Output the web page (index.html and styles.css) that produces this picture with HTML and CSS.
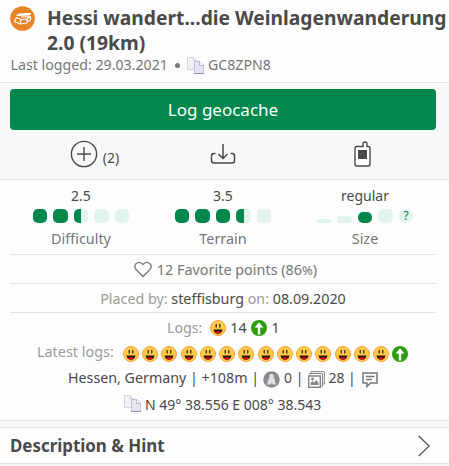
FILE: index.html
```
<!DOCTYPE html>
<html lang="en">
<head>
<meta charset="utf-8">
<title>Geocache</title>
<link rel="stylesheet" href="styles.css">
</head>
<body>
<svg class="defs" width="0" height="0">
  <symbol id="face" viewBox="0 0 16 16">
    <circle cx="8" cy="8" r="7.500" fill="#ffcb48" stroke="#f5a035"/>
    <path d="M6.200 4v3.500M9.800 4v3.500" stroke="#2b1c0c" stroke-width="1.200"/>
    <path d="M3.500 9.500h9q-.7 4.200-4.500 4.200T3.500 9.500z" fill="#321008"/>
    <path d="M5.200 12.300q2.800-2 5.600 0-2.800 2.400-5.600 0z" fill="#f20d16"/>
  </symbol>
  <symbol id="up" viewBox="0 0 16 16">
    <circle cx="8" cy="8" r="8" fill="#2a9d08"/>
    <path d="M8 2.200L12.500 7.500H9.200V14.500H6.800V7.500H3.500z" fill="#fff"/>
  </symbol>
  <symbol id="copy" viewBox="0 0 17 17">
    <path d="M.5 .5h6l3 3v9h-9z" fill="#f1f1f8" stroke="#d3d3e2"/>
    <path d="M6.500 .5v3h3" fill="#fff" stroke="#c9c9dc"/>
    <path d="M7.500 4.500h5.500l3.500 3.500v8.500h-9z" fill="#e6e6f3" stroke="#c0c0d8"/>
    <path d="M12.500 4.500v4h4" fill="#fff" stroke="#b5b5d0"/>
    <path d="M7 16.500h10" stroke="#8c8cb6"/>
  </symbol>
</svg>
<header class="header">
  <div class="title-row">
    <svg class="badge" width="25" height="25" viewBox="0 0 25 25">
      <circle cx="12.500" cy="12.500" r="12.300" fill="#e98424"/>
      <g fill="none" stroke="#fff" stroke-width="1.200" stroke-linejoin="round">
        <path d="M9.500 8L20.500 7.500 19 8.800 7 9.500z" fill="#fff"/>
        <path d="M6.500 11.500L4.500 15.500 10 18 11 13.500zM11 13.500l6-.5v4l-7 1M17 12.500l3.500-2v3.500L17 16M11 11l9.500-.5"/>
      </g>
    </svg>
    <h1 class="title">Hessi wandert...die Weinlagenwanderung<br>2.0 (19km)</h1>
  </div>
  <div class="meta"><span class="last">Last logged: 29.03.2021</span><i class="bullet"></i><svg width="17" height="17"><use href="#copy"/></svg><span class="code">GC8ZPN8</span></div>
</header>
<section class="actions">
  <button class="log">Log geocache</button>
  <div class="tools">
    <div class="tool add">
      <svg width="28" height="28" viewBox="0 0 28 28" fill="none" stroke="#4a4a4a" stroke-width="1.400"><circle cx="14" cy="14" r="12.600"/><path d="M14 7v14M7 14h14"/></svg>
      <span>(2)</span>
    </div>
    <div class="tool"><svg width="26" height="24" viewBox="0 0 26 24" fill="none" stroke="#4a4a4a" stroke-width="1.500"><path d="M13 1v14.500M8.500 11l4.500 4.500 4.500-4.500M5.500 10.500H4Q1.500 10.500 1.500 13v4.500Q1.500 20 4 20h18q2.500 0 2.500-2.500V13q0-2.500-2.500-2.500h-1.500"/></svg></div>
    <div class="tool gps"><svg width="17" height="26" viewBox="0 0 17 26"><path d="M3 5.500h6V3Q9 1 11 1t2 2v2.500h1.200q1.800 0 1.800 1.800v15.900q0 1.800-1.800 1.800H2.800Q1 25 1 23.200V7.300q0-1.800 2-1.800z" fill="#fff" stroke="#4a4a4a" stroke-width="1.400"/><path d="M4 9h9v9H4z" fill="#4a4a4a"/></svg></div>
  </div>
</section>
<main class="info">
  <div class="ratings">
    <div class="rating"><span class="value">2.5</span><div class="dots"><i class="on"></i><i class="on"></i><i class="half"></i><i></i><i></i></div><span class="label">Difficulty</span></div>
    <div class="rating"><span class="value">3.5</span><div class="dots"><i class="on"></i><i class="on"></i><i class="on"></i><i class="half"></i><i></i></div><span class="label">Terrain</span></div>
    <div class="rating"><span class="value">regular</span><div class="dots"><i class="s1"></i><i class="s2"></i><i class="on s3"></i><i></i><i class="q">?</i></div><span class="label">Size</span></div>
  </div>
  <div class="row fav"><svg width="18" height="17" viewBox="0 0 18 17"><path d="M9 15.500L2.500 9Q-.5 5.500 2 2.700 5.500-.5 9 3.500 12.500-.5 16 2.700 18.500 5.500 15.500 9z" fill="none" stroke="#777" stroke-width="1.300"/></svg><span>12 Favorite points (86<small>%</small>)</span></div>
  <div class="row placed"><span><em>Placed by:</em> steffisburg <em>on:</em> 08.09.2020</span></div>
  <div class="line logs"><em>Logs:</em><svg class="f" width="16" height="16"><use href="#face"/></svg><span>14</span><svg class="u" width="16" height="16"><use href="#up"/></svg><span>1</span></div>
  <div class="line latest"><em>Latest logs:</em><div class="faces">
    <svg><use href="#face"/></svg><svg><use href="#face"/></svg><svg><use href="#face"/></svg><svg><use href="#face"/></svg><svg><use href="#face"/></svg><svg><use href="#face"/></svg><svg><use href="#face"/></svg><svg><use href="#face"/></svg><svg><use href="#face"/></svg><svg><use href="#face"/></svg><svg><use href="#face"/></svg><svg><use href="#face"/></svg><svg><use href="#face"/></svg><svg><use href="#face"/></svg><svg><use href="#up"/></svg>
  </div></div>
  <div class="line place"><span class="region">Hessen, Germany | +108m |</span>
    <svg class="bug" width="17" height="17" viewBox="0 0 17 17"><circle cx="8.500" cy="8.500" r="8.300" fill="#8b8b8f"/><path d="M8.500 2.800q2.200 0 2.200 2.200v2q1.800 1.500 1.300 4.500l1.500 2H9.500v-1h-2v1h-4l1.500-2Q4.500 8.500 6.300 7V5q0-2.200 2.200-2.200z" fill="#e2e2e6"/></svg><span class="zero">0 |</span>
    <svg class="pics" width="17" height="17" viewBox="0 0 17 17" fill="none" stroke="#858588"><path d="M3 3V.6h13.400V13H15M1.800 4.500V2.500h12.700V15H13"/><path d="M.7 5h11.600v11.300H.7z" fill="#fff" stroke-width="1.400"/><path d="M2.500 14v-2l2-2 1.500 1.500L8.500 9l2 3v2z" fill="#858588" stroke="none"/><circle cx="4.500" cy="8" r="1" fill="#858588"/></svg><span class="count">28 |</span>
    <svg class="note" width="16" height="16" viewBox="0 0 16 16" fill="none" stroke="#77777a" stroke-width="1.500"><path d="M1 1h14v10H8.500L5 14.500V11H1zM4 4.500h8.500M4 7.500h6"/></svg>
  </div>
  <div class="line coords"><svg width="17" height="17"><use href="#copy"/></svg><span>N 49° 38.556 E 008° 38.543</span></div>
</main>
<section class="desc"><h2>Description &amp; Hint</h2><svg width="12" height="22" viewBox="0 0 12 22" fill="none" stroke="#4a4a4a" stroke-width="1.200"><path d="M.7 1L11.200 11 .7 21"/></svg></section>
</body>
</html>
```
FILE: styles.css
```
* { box-sizing: border-box; }
body {
  margin: 0; height: 466px; overflow: hidden;
  background: #f7f8f8;
  font: 14px/20px "Noto Sans", sans-serif; color: #4a4a4a;
}
svg { display: block; flex: none; }
.defs { position: absolute; }
h1, h2 { margin: 0; }
em { font-style: normal; color: #9b9b9b; }
span, em { white-space: nowrap; }
.header { height: 83px; padding: 5px 0 0 10px; background: #fdfdfd; border-bottom: 1px solid #dfe3e1; }
.title-row { display: flex; height: 50px; }
.badge { margin-top: 1px; }
.title { margin-left: 12px; font-size: 19.250px; line-height: 25px; white-space: nowrap; }
.meta { display: flex; align-items: center; height: 20px; color: #777; font-size: 14.200px; padding-left: .5px; }
.bullet { width: 5px; height: 5px; margin: 0 7px 0 7px; border-radius: 50%; background: #777; }
.code { margin-left: 4px; }
.actions { height: 97px; padding: 6px 13px 0 10px; border-bottom: 1px solid #dfe3e1; }
.log { display: block; width: 100%; height: 41px; padding: 0; border: 0; border-radius: 4px; background: #02874d; color: #fff; font: 17px/41px "Noto Sans", sans-serif; }
.tools { display: grid; grid-template-columns: repeat(3, 1fr); height: 49px; }
.tool { display: flex; justify-content: center; align-items: center; }
.add { padding: 0 0 2px 27px; gap: 5px; }
.add span { padding-top: 9px; }
.gps { padding: 0 6px 1px 0; }
.info { height: 241px; padding: 0 13px 0 10px; background: #fdfdfd; border-bottom: 1px solid #dfe3e1; }
.ratings { display: grid; grid-template-columns: repeat(3, 1fr); height: 75px; border-bottom: 1px solid #dfe3e1; }
.rating { display: flex; flex-direction: column; align-items: center; padding-top: 6px; }
.dots { display: flex; align-items: flex-end; gap: 6px; height: 14px; margin: 3px 0 6px; }
.dots i { width: 14.500px; height: 14px; border-radius: 5px; background: #e3f4ec; }
.dots i.on { background: #02874d; }
.dots i.half { background: linear-gradient(90deg, #02874d 50%, #e3f4ec 50%); }
.dots i.s1 { height: 4px; border-radius: 2px; }
.dots i.s2 { height: 7px; border-radius: 4px; }
.dots i.s3 { height: 11px; }
.dots i.q { color: #02874d; font: 12px/14px "Noto Sans", sans-serif; text-align: center; border-radius: 7px; }
.label { color: #777; font-size: 14.400px; }
.row { display: flex; justify-content: center; align-items: center; height: 29px; border-bottom: 1px solid #dfe3e1; font-size: 14.400px; }
.fav { gap: 5px; color: #777; padding: 1px 0 0 5px; }
.fav small { font-size: 13px; }
.placed { padding-top: 1px; font-size: 14.300px; }
.line { display: flex; align-items: center; }
.logs { height: 28px; padding: 2px 0 0 157px; font-size: 14.200px; }
.logs .f { margin: 0 4px 0 8px; }
.logs .u { margin: 0 5px 0 4px; }
.latest { height: 25px; padding-left: 27px; font-size: 14.400px; }
.latest em { padding-bottom: 3px; }
.faces { display: flex; gap: 3.250px; margin-left: 9px; }
.faces svg { width: 16px; height: 16px; }
.place { height: 24px; padding-left: 58px; }
.region { font-size: 14.250px; }
.bug { margin: 3px 4px 0 4px; }
.pics { margin: 2px 3px 0 5px; }
.note { margin: 3px 0 0 6px; }
.coords { height: 29px; padding-left: 114px; }
.coords span { margin-left: 4px; }
.coords svg { margin-bottom: 3px; }
.desc { display: flex; align-items: center; justify-content: space-between; height: 37px; margin-top: 6px; padding: 0 19px 0 10px; background: #fdfdfd; border: solid #dfe3e1; border-width: 1px 0; }
.desc h2 { font-size: 16.900px; line-height: 22px; }
```
